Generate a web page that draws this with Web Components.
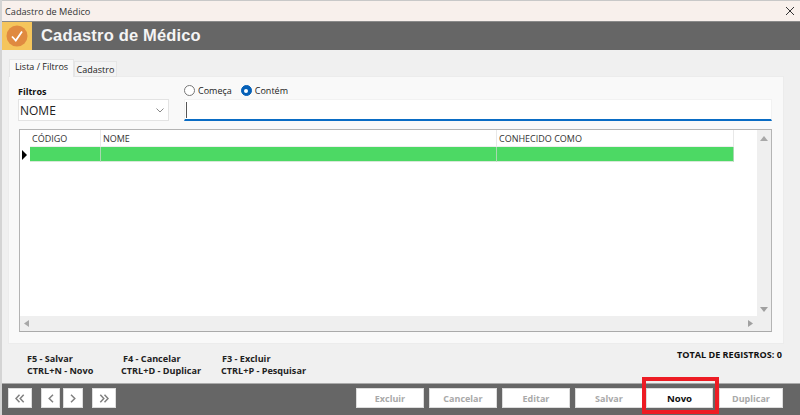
<!DOCTYPE html>
<html>
<head>
<meta charset="utf-8">
<style>
html,body{margin:0;padding:0;background:#fff;height:415px;overflow:hidden}
</style>
</head>
<body>
<cad-janela></cad-janela>
<script>
const FONTE = '"Open Sans","Noto Sans",sans-serif';

class TituloBar extends HTMLElement{
  constructor(){
    super();
    this.attachShadow({mode:'open'});
    this.shadowRoot.innerHTML = `<style>
      :host{display:flex;align-items:center;justify-content:space-between;height:21px;background:#f8f0ec;
        border-top:1px solid #c8c8c8;box-sizing:border-box;padding:0 5px 0 3px;
        font:9.2px ${FONTE};color:#333;flex:none}
      svg{display:block}
    </style>
    <span><slot></slot></span>
    <svg width="10" height="10" viewBox="0 0 10 10"><path d="M1 1L9 9M9 1L1 9" stroke="#333" stroke-width="1" fill="none"/></svg>`;
  }
}
customElements.define('titulo-bar', TituloBar);

class CabecalhoBar extends HTMLElement{
  constructor(){
    super();
    this.attachShadow({mode:'open'});
    this.shadowRoot.innerHTML = `<style>
      :host{display:flex;height:28px;background:#666;flex:none;margin-bottom:1px;border-top:1px solid #8a8a8a;box-sizing:content-box}
      .ico{width:30px;background:#f5c55c;display:flex;align-items:center;justify-content:center;flex:none}
      h1{margin:0;padding-left:9px;font:bold 16.5px/26px "Liberation Sans",sans-serif;color:#f4f4f4;letter-spacing:.17px}
    </style>
    <div class="ico"><svg width="22" height="22" viewBox="0 0 22 22">
      <circle cx="11" cy="11" r="10.5" fill="#e08a40"/>
      <path d="M6 11.5L9.8 15.5L16 6.5" stroke="#fff" stroke-width="1.8" fill="none"/></svg></div>
    <h1><slot></slot></h1>`;
  }
}
customElements.define('cabecalho-bar', CabecalhoBar);

class AbasBar extends HTMLElement{
  constructor(){
    super();
    this.attachShadow({mode:'open'});
    this.shadowRoot.innerHTML = `<style>
      :host{display:flex;align-items:flex-end;height:18px;padding-left:1px;flex:none;font:9px ${FONTE};color:#222;position:relative;z-index:1;margin-bottom:-1px}
      div{box-sizing:border-box}
      .on{height:18px;width:65px;background:#f9f9f9;border:1px solid #e6e6e6;border-bottom:0;text-align:center;line-height:14px}
      .off{height:16px;width:43px;background:#f3f3f3;border:1px solid #e6e6e6;text-align:center;line-height:15px}
    </style>
    <div class="on">Lista / Filtros</div><div class="off">Cadastro</div>`;
  }
}
customElements.define('abas-bar', AbasBar);

class FiltroBar extends HTMLElement{
  constructor(){
    super();
    this.attachShadow({mode:'open'});
    this.shadowRoot.innerHTML = `<style>
      :host{display:flex;gap:15px;flex:none;height:51px;font:9px ${FONTE};color:#222}
      .col1{width:151px;flex:none;padding-top:7px;box-sizing:border-box}
      .rot{font-weight:bold;line-height:15px;height:15px;color:#111}
      .sel{height:22px;background:#fff;border:1px solid #e3e3e3;box-sizing:border-box;display:flex;align-items:center;justify-content:space-between;padding:0 4px 0 1px;font-size:12px;color:#222}
      .col2{flex:1;display:flex;flex-direction:column;padding:5px 0 0 0;box-sizing:border-box}
      .radios{display:flex;align-items:center;height:17px;gap:3px}
      .rd{width:9px;height:9px;border:1px solid #777;border-radius:50%;flex:none;background:#fff}
      .rd.on{border:1px solid #0560b8;background:#0560b8;position:relative}
      .rd.on::after{content:"";position:absolute;left:2.5px;top:2.5px;width:4px;height:4px;border-radius:50%;background:#fff}
      .lab{margin-right:6px}
      .inp{height:22px;background:#fff;border:1px solid #f2f2f2;border-bottom:2px solid #0a6cc4;box-sizing:border-box;padding:2px 0 0 1px}
      .cur{width:1px;height:16px;background:#555}
    </style>
    <div class="col1"><div class="rot">Filtros</div>
      <div class="sel"><span>NOME</span><svg width="8" height="5" viewBox="0 0 8 5"><path d="M.5 .5L4 4L7.5 .5" stroke="#888" fill="none"/></svg></div></div>
    <div class="col2"><div class="radios"><span class="rd"></span><span class="lab">Começa</span><span class="rd on"></span><span class="lab">Contém</span></div>
      <div class="inp"><div class="cur"></div></div></div>`;
  }
}
customElements.define('filtro-bar', FiltroBar);

class GradeDados extends HTMLElement{
  constructor(){
    super();
    this.attachShadow({mode:'open'});
    this.shadowRoot.innerHTML = `<style>
      :host{display:grid;grid-template-columns:1fr 14px;grid-template-rows:1fr 15px;height:203px;box-sizing:border-box;
        background:#fff;border:1px solid #b4b4b4;border-bottom:1px solid #aaa;flex:none;font:9px ${FONTE};color:#333;margin:1px 0 0 1px}
      .corpo{display:grid;grid-template-columns:10px 71px 396px 237px;grid-template-rows:17px 15px;align-content:start}
      .corpo div{box-sizing:border-box;line-height:17px;padding-left:2px}
      .h{border-right:1px solid #e8e8e8;border-bottom:1px solid #eee}
      .g{background:#4cd964;border-right:1px solid #a8d8b0;border-bottom:1px solid #d8e8d8}
      .seta{display:flex;align-items:center;justify-content:flex-start;padding:0 !important}
      .vs{background:#efefef;display:flex;flex-direction:column;justify-content:space-between;align-items:center;padding:6px 0 4px;box-sizing:border-box}
      .hs{background:#efefef;display:flex;justify-content:space-between;align-items:center;padding:0 4px 0 4px;grid-column:1}
      .canto{background:#efefef}
    </style>
    <div class="corpo">
      <div></div><div class="h">CÓDIGO</div><div class="h">NOME</div><div class="h">CONHECIDO COMO</div>
      <div class="seta"><svg width="7" height="10" viewBox="0 0 7 10"><path d="M2 0L7 5L2 10Z" fill="#000"/></svg></div><div class="g"></div><div class="g"></div><div class="g"></div>
    </div>
    <div class="vs">
      <svg width="8" height="5" viewBox="0 0 8 5"><path d="M4 0L8 5H0Z" fill="#a8a8a8"/></svg>
      <svg width="8" height="5" viewBox="0 0 8 5"><path d="M4 5L8 0H0Z" fill="#a0a0a0"/></svg>
    </div>
    <div class="hs">
      <svg width="5" height="7" viewBox="0 0 5 7"><path d="M0 3.5L5 0V7Z" fill="#a8a8a8"/></svg>
      <svg width="5" height="7" viewBox="0 0 5 7"><path d="M5 3.5L0 0V7Z" fill="#a0a0a0"/></svg>
    </div>
    <div class="canto"></div>`;
  }
}
customElements.define('grade-dados', GradeDados);

class AtalhosBar extends HTMLElement{
  constructor(){
    super();
    this.attachShadow({mode:'open'});
    this.shadowRoot.innerHTML = `<style>
      :host{display:flex;justify-content:space-between;flex:1;padding:5px 2px 0 19px;box-sizing:border-box;font:bold 9.1px/12px ${FONTE};color:#222}
      .g{display:grid;grid-template-columns:94px 100px auto;align-self:flex-start;margin-top:4px}
      .a{padding-left:2px}
      .b{padding-left:1px}
      .t{color:#111;line-height:12px}
    </style>
    <div class="g">
      <span>F5 - Salvar</span><span class="a">F4 - Cancelar</span><span class="b">F3 - Excluir</span>
      <span>CTRL+N - Novo</span><span>CTRL+D - Duplicar</span><span>CTRL+P - Pesquisar</span>
    </div>
    <div class="t">TOTAL DE REGISTROS: 0</div>`;
  }
}
customElements.define('atalhos-bar', AtalhosBar);

class BotaoBar extends HTMLElement{
  constructor(){
    super();
    this.attachShadow({mode:'open'});
    this.shadowRoot.innerHTML = `<style>
      :host{display:flex;align-items:center;justify-content:center;height:20px;background:#fff;border:1px solid #ddd;box-sizing:border-box;
        font:bold 9px ${FONTE};color:#a9a9a9;flex:none;position:relative}
      :host([ativo]){color:#111;font-size:9.6px}
      :host([marca])::after{content:"";position:absolute;left:-5px;right:-7px;top:-12px;bottom:-7px;border:4px solid #ed1c24;pointer-events:none}
    </style><slot></slot>`;
  }
}
customElements.define('botao-bar', BotaoBar);

class RodapeBar extends HTMLElement{
  constructor(){
    super();
    this.attachShadow({mode:'open'});
    this.shadowRoot.innerHTML = `<style>
      :host{display:flex;align-items:flex-start;height:32px;background:#666;border-top:1px solid #aaa;box-sizing:border-box;padding:4px 0 0 6px;flex:none}
      .s{display:flex}
      .d{margin-left:auto;display:flex;padding-right:17px}
    </style>
    <div class="s"><slot name="nav"></slot></div><div class="d"><slot name="acao"></slot></div>`;
  }
}
customElements.define('rodape-bar', RodapeBar);

class CadJanela extends HTMLElement{
  constructor(){
    super();
    this.attachShadow({mode:'open'});
    this.shadowRoot.innerHTML = `<style>
      :host{display:flex;flex-direction:column;height:415px;width:798px;margin-left:2px;background:#f0f0f0;box-shadow:-2px 0 0 #d4d4d4;overflow:hidden}
      .meio{flex:1;display:flex;flex-direction:column;padding:8px 16px 0 6px;min-height:0}
      .painel{background:#f9f9f9;border:1px solid #ececec;height:268px;box-sizing:border-box;padding:0 11px 0 9px;display:flex;flex-direction:column;flex:none}
      botao-bar svg{display:block}
    </style>
    <titulo-bar>Cadastro de Médico</titulo-bar>
    <cabecalho-bar>Cadastro de Médico</cabecalho-bar>
    <div class="meio">
      <abas-bar></abas-bar>
      <div class="painel"><filtro-bar></filtro-bar><grade-dados></grade-dados></div>
      <atalhos-bar></atalhos-bar>
    </div>
    <rodape-bar>
      <botao-bar slot="nav" style="width:24px;margin-right:9px"><svg width="10" height="9" viewBox="0 0 10 9"><path d="M4.5 .7L1 4.5L4.5 8.3M8.7 .7L5.2 4.5L8.7 8.3" stroke="#808080" stroke-width="1.5" fill="none"/></svg></botao-bar>
      <botao-bar slot="nav" style="width:19px;margin-right:3px"><svg width="6" height="9" viewBox="0 0 6 9"><path d="M5 .7L1.2 4.5L5 8.3" stroke="#808080" stroke-width="1.5" fill="none"/></svg></botao-bar>
      <botao-bar slot="nav" style="width:20px;margin-right:9px"><svg width="6" height="9" viewBox="0 0 6 9"><path d="M1 .7L4.8 4.5L1 8.3" stroke="#808080" stroke-width="1.5" fill="none"/></svg></botao-bar>
      <botao-bar slot="nav" style="width:24px"><svg width="10" height="9" viewBox="0 0 10 9"><path d="M1.3 .7L4.8 4.5L1.3 8.3M5.5 .7L9 4.5L5.5 8.3" stroke="#808080" stroke-width="1.5" fill="none"/></svg></botao-bar>
      <botao-bar slot="acao" style="width:68px;margin-right:5px">Excluir</botao-bar>
      <botao-bar slot="acao" style="width:68px;margin-right:5px">Cancelar</botao-bar>
      <botao-bar slot="acao" style="width:68px;margin-right:5px">Editar</botao-bar>
      <botao-bar slot="acao" style="width:68px;margin-right:3px">Salvar</botao-bar>
      <botao-bar slot="acao" ativo marca style="width:67px;margin-right:6px">Novo</botao-bar>
      <botao-bar slot="acao" style="width:64px">Duplicar</botao-bar>
    </rodape-bar>`;
  }
}
customElements.define('cad-janela', CadJanela);
</script>
</body>
</html>
